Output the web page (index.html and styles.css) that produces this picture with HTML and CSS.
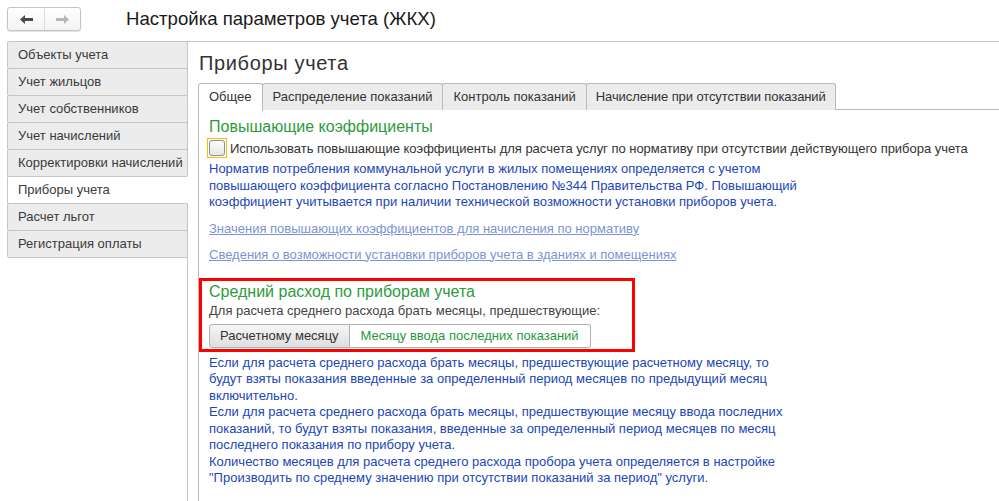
FILE: index.html
```html
<!DOCTYPE html>
<html lang="ru">
<head>
<meta charset="utf-8">
<title>Настройка параметров учета (ЖКХ)</title>
<link rel="stylesheet" href="styles.css">
</head>
<body>
<div class="app">
  <header class="top">
    <div class="nav">
      <span class="nav-btn">
        <svg width="13" height="9" viewBox="0 0 13 9"><path d="M0 4.5 L5 0 V3 H13 V6 H5 V9 Z" fill="#4a4a4a"/></svg>
      </span>
      <span class="nav-btn">
        <svg width="13" height="9" viewBox="0 0 13 9"><path d="M13 4.5 L8 0 V3 H0 V6 H8 V9 Z" fill="#b8b8b8"/></svg>
      </span>
    </div>
    <h1 class="title">Настройка параметров учета (ЖКХ)</h1>
  </header>
  <div class="body">
    <aside class="side">
      <div class="side-item">Объекты учета</div>
      <div class="side-item">Учет жильцов</div>
      <div class="side-item">Учет собственников</div>
      <div class="side-item">Учет начислений</div>
      <div class="side-item">Корректировки начислений</div>
      <div class="side-item active">Приборы учета</div>
      <div class="side-item">Расчет льгот</div>
      <div class="side-item">Регистрация оплаты</div>
    </aside>
    <main class="main">
      <h2 class="page-title">Приборы учета</h2>
      <div class="tabs">
        <div class="tab active">Общее</div>
        <div class="tab">Распределение показаний</div>
        <div class="tab">Контроль показаний</div>
        <div class="tab narrow">Начисление при отсутствии показаний</div>
      </div>
      <div class="tab-panel">
        <h3 class="group-title">Повышающие коэффициенты</h3>
        <label class="check-row">
          <span class="check-focus"><span class="check-box"></span></span>
          <span class="check-text">Использовать повышающие коэффициенты для расчета услуг по нормативу при отсутствии действующего прибора учета</span>
        </label>
        <p class="note">Норматив потребления коммунальной услуги в жилых помещениях определяется с учетом<br>повышающего коэффициента согласно Постановлению №344 Правительства РФ. Повышающий<br>коэффициент учитывается при наличии технической возможности установки приборов учета.</p>
        <a class="link first" href="#">Значения повышающих коэффициентов для начисления по нормативу</a>
        <a class="link" href="#">Сведения о возможности установки приборов учета в зданиях и помещениях</a>
        <section class="highlight">
          <h3 class="group-title avg">Средний расход по приборам учета</h3>
          <div class="label">Для расчета среднего расхода брать месяцы, предшествующие:</div>
          <div class="switch">
            <span class="sw-btn pressed">Расчетному месяцу</span>
            <span class="sw-btn current">Месяцу ввода последних показаний</span>
          </div>
        </section>
        <p class="note after">Если для расчета среднего расхода брать месяцы, предшествующие расчетному месяцу, то<br>будут взяты показания введенные за определенный период месяцев по предыдущий месяц<br>включительно.<br>Если для расчета среднего расхода брать месяцы, предшествующие месяцу ввода последних<br>показаний, то будут взяты показания, введенные за определенный период месяцев по месяц<br>последнего показания по прибору учета.<br>Количество месяцев для расчета среднего расхода пробора учета определяется в настройке<br>"Производить по среднему значению при отсутствии показаний за период" услуги.</p>
      </div>
    </main>
  </div>
</div>
</body>
</html>
```
FILE: styles.css
```css
html, body {
  margin: 0;
  padding: 0;
  background: #fff;
}
body {
  font-family: "Liberation Sans", Arial, sans-serif;
  font-size: 13px;
  color: #333;
}
.app {
  height: 501px;
  display: flex;
  flex-direction: column;
  overflow: hidden;
}
.top {
  height: 41px;
  display: flex;
  align-items: flex-start;
  flex-shrink: 0;
}
.nav {
  margin: 7px 0 0 7px;
  display: flex;
  height: 22px;
  border: 1px solid #c3c3c3;
  border-radius: 3px;
  background: linear-gradient(#ffffff, #f3f3f3);
  box-shadow: 0 1px 1px rgba(0,0,0,0.12);
}
.nav-btn {
  width: 36px;
  display: flex;
  align-items: center;
  justify-content: center;
}
.nav-btn + .nav-btn {
  width: 35px;
  border-left: 1px solid #dcdcdc;
}
.title {
  margin: 0 0 0 45px;
  font-size: 18.6px;
  font-weight: normal;
  color: #1a1a1a;
  line-height: 22px;
  padding-top: 8px;
}
.body {
  flex: 1;
  display: flex;
  min-height: 0;
}
.side {
  width: 181px;
  margin-left: 7px;
  margin-right: -1px;
  position: relative;
  z-index: 1;
  flex-shrink: 0;
}
.side-item {
  height: 26px;
  line-height: 26px;
  box-sizing: content-box;
  border: 1px solid #c6c6c6;
  border-radius: 2px;
  background: #ececec;
  padding-left: 10px;
  margin-top: -1px;
  color: #3a3a3a;
}
.side-item:first-child {
  margin-top: 0;
}
.side-item.active {
  background: #fff;
  border-right-color: #fff;
  border-radius: 2px 0 0 2px;
}
.main {
  flex: 1;
  border-top: 1px solid #c6c6c6;
  border-left: 1px solid #c6c6c6;
  display: flex;
  flex-direction: column;
  padding-left: 10px;
  min-width: 0;
}
.page-title {
  margin: 7px 0 0 1px;
  font-size: 20px;
  font-weight: normal;
  line-height: 28px;
  color: #333;
  letter-spacing: 0.65px;
}
.tabs {
  display: flex;
  margin-top: 6px;
  height: 27px;
  position: relative;
  z-index: 1;
  margin-bottom: -1px;
}
.tab {
  height: 26px;
  line-height: 26px;
  border: 1px solid #b9b9b9;
  border-bottom: none;
  border-radius: 3px 3px 0 0;
  background: #ececec;
  padding: 0 10px;
  margin-left: -1px;
  color: #333;
  white-space: nowrap;
}
.tab:first-child {
  margin-left: 0;
}
.tab.active {
  background: #fff;
  height: 27px;
}
.tab.narrow {
  padding: 0 9px;
  letter-spacing: -0.1px;
}
.tab-panel {
  flex: 1;
  border-top: 1px solid #b9b9b9;
  border-left: 1px solid #b9b9b9;
  padding-left: 10px;
}
.group-title {
  margin: 7px 0 0 0;
  font-size: 16px;
  font-weight: normal;
  line-height: 20px;
  color: #2e9a3e;
}
.check-row {
  display: flex;
  align-items: center;
  height: 22px;
  margin-left: -2px;
}
.check-focus {
  width: 18px;
  height: 18px;
  border: 1px solid #f2c200;
  display: flex;
  align-items: center;
  justify-content: center;
  margin-right: 3px;
}
.check-box {
  width: 14px;
  height: 14px;
  border: 1px solid #8f8f8f;
  border-radius: 3px;
  background: linear-gradient(#fdfdfd, #e6e6e6);
}
.check-text {
  color: #333;
  white-space: nowrap;
  letter-spacing: -0.02px;
}
.note {
  margin: 2px 0 0 0;
  color: #2146b8;
  line-height: 16.5px;
  white-space: nowrap;
}
.link {
  display: block;
  color: #7a94d4;
  text-decoration: underline;
  line-height: 16px;
  margin-top: 10px;
  width: max-content;
}
.highlight {
  margin: 15px 0 0 -10px;
  width: 423px;
  border: 3px solid #ff0000;
  padding: 0 0 1px 7px;
  box-sizing: content-box;
}
.group-title.avg {
  margin-top: 1px;
}
.label {
  line-height: 16px;
  margin-top: 1px;
  color: #444;
}
.switch {
  display: flex;
  margin-top: 5px;
  height: 24px;
}
.sw-btn {
  line-height: 22px;
  border: 1px solid #b0b0b0;
  padding: 0 10px;
  white-space: nowrap;
}
.sw-btn.pressed {
  background: linear-gradient(#f6f6f6, #dedede);
  border-radius: 3px 0 0 3px;
  color: #333;
}
.sw-btn.current {
  background: #fff;
  border-left: none;
  border-radius: 0 3px 3px 0;
  color: #1f9a3a;
  padding: 0 11px;
}
.note.after {
  margin-top: 3px;
}
```
